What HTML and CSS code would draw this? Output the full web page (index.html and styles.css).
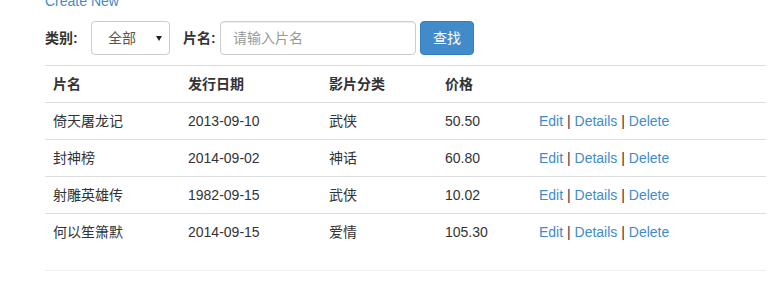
FILE: index.html
```html
<!DOCTYPE html>
<html lang="zh-CN">
<head>
<meta charset="utf-8">
<title>Movies</title>
<link rel="stylesheet" href="styles.css">
</head>
<body>
<div class="page">
  <p class="create"><a href="#">Create New</a></p>
  <form class="search">
    <label class="lbl lbl-genre">类别:</label>
    <div class="select-wrap">
      <select class="select">
        <option>全部</option>
        <option>武侠</option>
        <option>神话</option>
        <option>爱情</option>
      </select>
      <span class="arrow"></span>
    </div>
    <label class="lbl lbl-title">片名:</label>
    <input class="input" type="text" placeholder="请输入片名">
    <button class="btn" type="button">查找</button>
  </form>
  <table class="table">
    <colgroup>
      <col class="c1"><col class="c2"><col class="c3"><col class="c4"><col>
    </colgroup>
    <thead>
      <tr><th>片名</th><th>发行日期</th><th>影片分类</th><th>价格</th><th></th></tr>
    </thead>
    <tbody>
      <tr><td>倚天屠龙记</td><td>2013-09-10</td><td>武侠</td><td>50.50</td><td><a href="#">Edit</a> | <a href="#">Details</a> | <a href="#">Delete</a></td></tr>
      <tr><td>封神榜</td><td>2014-09-02</td><td>神话</td><td>60.80</td><td><a href="#">Edit</a> | <a href="#">Details</a> | <a href="#">Delete</a></td></tr>
      <tr><td>射雕英雄传</td><td>1982-09-15</td><td>武侠</td><td>10.02</td><td><a href="#">Edit</a> | <a href="#">Details</a> | <a href="#">Delete</a></td></tr>
      <tr><td>何以笙箫默</td><td>2014-09-15</td><td>爱情</td><td>105.30</td><td><a href="#">Edit</a> | <a href="#">Details</a> | <a href="#">Delete</a></td></tr>
    </tbody>
  </table>
  <hr class="rule">
</div>
</body>
</html>
```
FILE: styles.css
```css
html, body {
  margin: 0;
  padding: 0;
  background: #fff;
}
body {
  font-family: "Liberation Sans", Arial, "Noto Sans CJK SC", sans-serif;
  font-size: 14px;
  line-height: 20px;
  color: #333;
}
a {
  color: #428bca;
  text-decoration: none;
}
.page {
  width: 721px;
  padding-left: 45px;
}
.create {
  margin: -9px 0 10px 0;
}
.search {
  display: flex;
  align-items: center;
  height: 34px;
  margin: 0 0 10px 0;
}
.lbl {
  font-weight: bold;
  white-space: nowrap;
}
.lbl-genre {
  width: 46px;
}
.lbl-title {
  width: 37px;
  margin-left: 13px;
}
.select-wrap {
  position: relative;
  width: 79px;
  height: 34px;
}
.select {
  appearance: none;
  -webkit-appearance: none;
  box-sizing: border-box;
  width: 79px;
  height: 34px;
  border: 1px solid #ccc;
  border-radius: 4px;
  background: #fff;
  padding: 0 0 0 16px;
  font-family: inherit;
  font-size: 14px;
  color: #555;
  outline: none;
}
.arrow {
  position: absolute;
  right: 8px;
  top: 15px;
  width: 0;
  height: 0;
  border-left: 3px solid transparent;
  border-right: 3px solid transparent;
  border-top: 5px solid #222;
  pointer-events: none;
}
.input {
  box-sizing: border-box;
  width: 196px;
  height: 34px;
  border: 1px solid #ccc;
  border-radius: 4px;
  padding: 6px 12px;
  font-family: inherit;
  font-size: 14px;
  color: #555;
  outline: none;
  box-shadow: inset 0 1px 1px rgba(0,0,0,0.075);
}
.input::placeholder {
  color: #999;
}
.btn {
  box-sizing: border-box;
  height: 34px;
  margin-left: 4px;
  padding: 6px 12px;
  background: #428bca;
  border: 1px solid #357ebd;
  border-radius: 4px;
  color: #fff;
  font-family: inherit;
  font-size: 14px;
  line-height: 20px;
}
.table {
  width: 721px;
  border-collapse: collapse;
  border-spacing: 0;
  table-layout: fixed;
}
.c1 { width: 135px; }
.c2 { width: 141px; }
.c3 { width: 116px; }
.c4 { width: 94px; }
.table th,
.table td {
  padding: 8px;
  line-height: 20px;
  border-top: 1px solid #ddd;
  text-align: left;
  vertical-align: top;
  white-space: nowrap;
}
.table th {
  font-weight: bold;
}
.rule {
  margin: 20px 0 0 0;
  border: 0;
  border-top: 1px solid #eee;
  height: 0;
}
```
